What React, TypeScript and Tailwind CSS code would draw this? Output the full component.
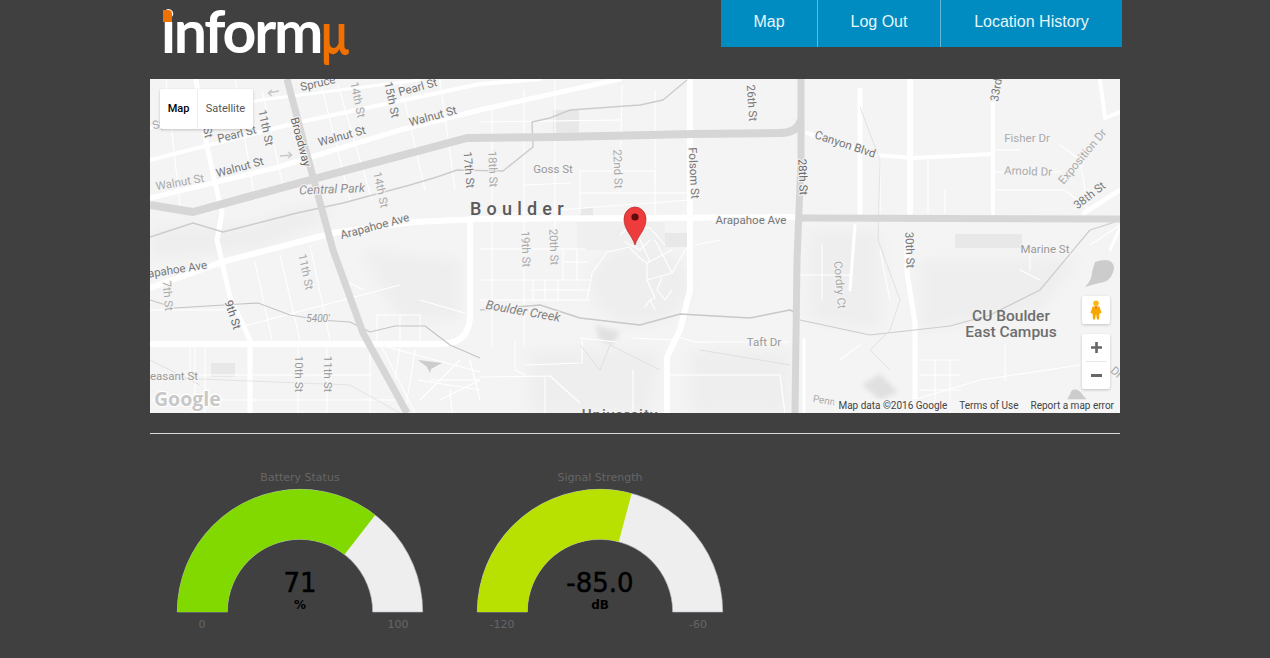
const mainRoads: [string, number][] = [
  ['M150 288 L222 262 L333 233 L413 222 L480 219 L800 217', 6],
  ['M150 344 L440 344 Q470 344 470 315 L470 219', 6],
  ['M196 80 L207 147 L222 213 L217 240 L230 297 L250 340 L250 413', 5],
  ['M690 80 L690 290 L680 330 L667 357 L667 413', 6],
  ['M910 80 L910 213', 6],
  ['M907 240 L907 273 L915 323 L915 413', 5],
  ['M993 103 L993 213', 4],
  ['M807 133 L877 155 L913 158 L973 155 L993 154', 4],
  ['M150 160 L300 122 L480 84 L540 79', 4],
  ['M150 198 L275 168 L400 130 L480 110 L620 79', 5],
  ['M150 128 L260 100 L420 80', 3],
  ['M804 340 L804 413', 3],
  ['M1120 112 L1105 118 L1100 80', 4],
  ['M1084 213 L1120 190', 5],
  ['M860 90 L860 213', 5],
  ['M855 225 L850 290', 3],
  ['M1110 250 L1120 228', 3],
]

const thinRoads = [
  'M166 79 L180 205', 'M235 79 L255 200', 'M262 90 L284 190', 'M320 80 L350 200', 'M338 85 L372 200',
  'M400 80 L425 190', 'M440 80 L455 190', 'M492 110 L492 345', 'M524 90 L524 345', 'M555 79 L555 240',
  'M622 85 L620 190', 'M655 90 L655 215', 'M480 122 L620 120', 'M492 215 L690 200', 'M580 171 L655 171 L655 178',
  'M580 171 L580 213', 'M580 193 L690 193', 'M525 185 L570 183', 'M255 262 L272 340', 'M280 255 L300 340',
  'M310 245 L330 340', 'M150 310 L230 310', 'M240 327 L400 285', 'M205 344 L205 413', 'M298 344 L298 413',
  'M327 344 L327 413', 'M195 344 L195 413', 'M250 375 L370 375', 'M370 345 L370 413', 'M250 400 L400 400',
  'M350 283 L363 290', 'M377 315 L420 315 L420 340', 'M377 315 L377 344', 'M400 315 L400 344', 'M420 300 L465 313',
  'M382 347 L415 413', 'M400 347 L395 380', 'M415 350 L405 413', 'M430 380 L480 380', 'M440 400 L480 380',
  'M450 390 L452 413', 'M420 400 L460 360', 'M470 360 L480 400', 'M418 380 L480 390', 'M380 345 L480 372',
  'M480 249 L585 249', 'M480 280 L590 280', 'M480 300 L590 300', 'M530 290 L590 290', 'M533 280 L533 300',
  'M545 280 L545 300', 'M558 280 L558 300', 'M563 250 L563 280', 'M577 250 L577 280', 'M565 262 L587 262',
  'M630 247 L607 252 L592 273 L587 300', 'M630 248 L640 258 L647 263 L647 280 L655 298 L650 300 L645 307', 'M650 300 L655 310',
  'M647 263 L672 250', 'M647 280 L672 273 L687 247', 'M655 240 L672 273', 'M662 277 L657 290 L665 300 L672 290',
  'M640 240 L650 262', 'M620 235 L630 226 L650 228 L665 245', 'M625 242 L640 250 L650 240',
  'M580 338 L617 342', 'M633 338 L673 340', 'M582 340 L582 363 L525 365', 'M515 342 L515 370 L525 375',
  'M480 377 L550 376 L580 403', 'M545 378 L545 413', 'M633 370 L633 413',
  'M675 336 L695 342 L790 342', 'M665 375 L780 375 L785 413',
  'M695 245 L720 240', 'M822 244 L822 300', 'M800 275 L850 275', 'M880 250 L890 300', 'M880 410 L980 380 L1080 365',
  'M920 360 L960 360', 'M920 375 L960 375', 'M920 390 L960 390', 'M935 360 L935 413', 'M950 360 L950 413',
  'M1005 345 L1005 380', 'M1030 250 L1030 270', 'M1020 270 L1040 280', 'M995 150 L1020 150', 'M1060 145 L1080 160 L1085 190',
  'M995 172 L1060 172', 'M995 190 L1065 190 L1090 210', 'M928 160 L928 213', 'M945 190 L945 213', 'M880 155 L880 213',
  'M1090 245 L1120 225', 'M150 375 L250 375', 'M190 345 L190 375', 'M150 400 L250 400', 'M840 360 L860 345',
]

const greyLines: [string, number, string][] = [
  ['M150 237 L193 223 L223 232 L297 213 L343 203 L410 185 L437 177 L457 170 L503 171 L533 147 L532 122 L550 118 L570 110 L640 105 L663 100 L687 80', 1.4, '#cccccc'],
  ['M150 300 L175 308 L240 304 L258 303 L290 315 L320 320 L350 322 L370 332 L395 326 L425 326 L450 345 L480 358', 1.1, '#c4c4c4'],
  ['M480 310 L540 305 L580 318 L640 325 L680 314 L750 318 L790 310 L800 315', 1.5, '#c8c8c8'],
  ['M800 320 L870 335 L950 326 L990 315 L1040 290 L1090 230 L1115 222', 1.2, '#cccccc'],
  ['M580 345 L600 370 L610 345 L630 355 L660 370', 0.7, '#d8d8d8'],
  ['M700 350 L790 365', 0.7, '#d8d8d8'],
  ['M860 107 L880 160 L878 240 L900 300 L890 330 L870 350 L890 370', 0.7, '#d8d8d8'],
  ['M150 360 L200 385', 0.7, '#d8d8d8'],
  ['M175 378 L350 385 L400 413', 0.6, '#d8d8d8'],
]

const labels: [string, number, number, number, number, string, boolean?][] = [
  ['Spruce', 318, 84, -13, 11.5, '#777'], ['14th St', 357, 100, 78, 11.5, '#aaa'], ['15th St', 391, 100, 78, 11.5, '#777'],
  ['Pearl St', 418, 88, -15, 11.5, '#777'], ['Walnut St', 433, 117, -15, 11.5, '#777'], ['Walnut St', 342, 137, -15, 11.5, '#777'],
  ['Broadway', 300, 142, 75, 11.5, '#666'], ['11th St', 265, 128, 78, 11.5, '#777'], ['Pearl St', 237, 135, -14, 11.5, '#777'],
  ['Walnut St', 240, 168, -15, 11.5, '#777'], ['Walnut St', 180, 183, -10, 11.5, '#aaa'], ['10th St', 205, 120, 80, 11.5, '#777'],
  ['Spruce', 170, 122, -15, 11.5, '#aaa'], ['17th St', 468, 170, 85, 11.5, '#777'], ['14th St', 380, 190, 78, 11.5, '#aaa'],
  ['Arapahoe Ave', 375, 227, -15, 11.5, '#777'], ['Arapahoe Ave', 172, 271, -9, 11.5, '#777'], ['7th St', 167, 296, 85, 11.5, '#aaa'],
  ['11th St', 305, 272, 78, 11.5, '#aaa'], ['9th St', 232, 315, 72, 11.5, '#666'], ['10th St', 298, 374, 90, 11.5, '#999'],
  ['11th St', 327, 374, 90, 11.5, '#999'], ['Pleasant St', 169, 377, 0, 11.5, '#999'], ['18th St', 492, 169, 88, 11.5, '#aaa'],
  ['19th St', 525, 249, 88, 11.5, '#aaa'], ['20th St', 553, 247, 88, 11.5, '#aaa'], ['22nd St', 617, 169, 88, 11.5, '#aaa'],
  ['Goss St', 553, 170, 0, 11.5, '#999'], ['Folsom St', 693, 173, 87, 11.5, '#777'], ['26th St', 751, 103, 86, 11.5, '#777'],
  ['28th St', 802, 177, 88, 11.5, '#666'], ['Arapahoe Ave', 751, 221, 0, 11.5, '#777'], ['Taft Dr', 764, 343, 0, 11.5, '#999'],
  ['Canyon Blvd', 845, 145, 18, 11.5, '#777'], ['33rd', 997, 90, -80, 11.5, '#777'], ['Fisher Dr', 1027, 139, 0, 11.5, '#aaa'],
  ['Arnold Dr', 1028, 172, 2, 11.5, '#aaa'], ['Exposition Dr', 1083, 157, -50, 11.5, '#aaa'], ['38th St', 1090, 196, -38, 11.5, '#777'],
  ['30th St', 909, 250, 88, 11.5, '#777'], ['Marine St', 1045, 250, 0, 11.5, '#999'], ['Cordry Ct', 839, 285, 85, 11.5, '#aaa'],
  ['Penn', 824, 401, 10, 10, '#aaa'], ['Dr', 1116, 373, 40, 11.5, '#aaa'],
  ['Central Park', 332, 190, -2, 12.5, '#909090', true], ['5400\'', 318, 319, 0, 10, '#999', true],
  ['Boulder Creek', 523, 312, 10, 12.5, '#808080', true],
]

function MapArt() {
  return (
    <svg viewBox="150 79 970 334" className="block w-full h-full" style={{ fontFamily: 'Roboto, sans-serif' }}>
      <defs>
        <filter id="soft" x="-40%" y="-40%" width="180%" height="180%"><feGaussianBlur stdDeviation="7" /></filter>
        <filter id="softer" x="-40%" y="-40%" width="180%" height="180%"><feGaussianBlur stdDeviation="2.5" /></filter>
      </defs>
      <rect x="150" y="79" width="970" height="334" fill="#f4f4f4" />
      <g fill="#eeeeee" filter="url(#soft)">
        <ellipse cx="640" cy="285" rx="50" ry="40" />
        <path d="M690 350 L790 350 L790 413 L690 413Z" />
        <path d="M920 260 L1080 260 L1040 310 L920 330Z" />
        <path d="M150 225 L250 225 L300 205 L340 215 L260 250 L150 260Z" />
        <path d="M530 350 L660 350 L650 413 L530 413Z" />
        <path d="M360 250 L460 260 L460 320 L400 320Z" />
        <path d="M810 230 L880 230 L880 330 L810 320Z" />
      </g>
      <g fill="#e0e0e0" filter="url(#softer)">
        <path d="M595 325 L620 332 L612 345 L600 340Z" />
        <path d="M862 385 L880 374 L898 392 L880 400Z" />
      </g>
      <g fill="#e8e8e8">
        <rect x="553" y="110" width="26" height="25" />
        <rect x="211" y="363" width="24" height="14" />
        <rect x="955" y="234" width="67" height="14" />
        <rect x="580" y="208" width="13" height="9" />
        <rect x="664" y="233" width="23" height="14" />
      </g>
      <rect x="577" y="222" width="88" height="28" fill="#efefef" />
      <g fill="none" stroke="#ffffff" strokeWidth="1.1" strokeLinecap="round" strokeLinejoin="round">
        {thinRoads.map((d, i) => <path key={i} d={d} />)}
      </g>
      <g fill="none" stroke="#ffffff" strokeLinecap="round" strokeLinejoin="round">
        {mainRoads.map(([d, w], i) => <path key={i} d={d} strokeWidth={w} />)}
      </g>
      <g fill="none" strokeLinejoin="round">
        {greyLines.map(([d, w, c], i) => <path key={i} d={d} strokeWidth={w} stroke={c} />)}
      </g>
      <g fill="none" stroke="#d6d6d6" strokeLinejoin="round">
        <path d="M150 205 L193 212 L310 180 L467 138 L560 137 L693 134 L780 133 Q797 133 801 120" strokeWidth="8" />
        <path d="M801 79 L801 160 L797 260 L795 413" strokeWidth="7" />
        <path d="M800 218 L1120 219" strokeWidth="7" />
        <path d="M287 79 L313 177 L333 250 L363 333 L407 413" strokeWidth="7" />
      </g>
      <g fill="#cccccc">
        <path d="M1095 262 Q1113 256 1114 268 Q1112 282 1099 283 L1085 287 Q1092 280 1092 272Z" />
        <path d="M1067 400 L1072 390 Q1078 388 1082 394 L1087 400Z" />
        <path d="M418 360 L442 363 L431 369 L430 373 L427 367Z" />
      </g>
      <path d="M268 93 L279 91 M268 93 L272 90 M268 93 L272 96" stroke="#c8c8c8" strokeWidth="1.4" fill="none" />
      <path d="M280 156 L292 155 M292 155 L288 152 M292 155 L288 158" stroke="#c8c8c8" strokeWidth="1.4" fill="none" />
      {labels.map(([t, x, y, r, s, c, it], i) => (
        <text key={i} x={x} y={y} fontSize={s} fill={c} fontStyle={it ? 'italic' : 'normal'} textAnchor="middle"
          dominantBaseline="middle" transform={`rotate(${r} ${x} ${y})`} stroke="#f5f5f5" strokeWidth="2" paintOrder="stroke">
          {t}
        </text>
      ))}
      <text x="470" y="215" fontSize="18" fontWeight="500" letterSpacing="5.2" fill="#5a5a5a">Boulder</text>
      <g fontSize="15.5" fontWeight="500" fill="#6e6e6e" textAnchor="middle">
        <text x="1011" y="321">CU Boulder</text>
        <text x="1011" y="337">East Campus</text>
      </g>
      <text x="620" y="420" fontSize="15" fontWeight="500" letterSpacing="1" fill="#6a6a6a" textAnchor="middle">University</text>
      <text x="154" y="406" fontSize="19.5" fontWeight="700" fill="#c8c8c8" stroke="#ffffff" strokeWidth="2.4" paintOrder="stroke"
        style={{ fontFamily: '"Open Sans", sans-serif' }}>Google</text>
      <path d="M635 245 C632 235 624 230 624 219 A11 12 0 0 1 646 219 C646 230 638 235 635 245Z" fill="#ee3b3b" stroke="#b52a2a" strokeWidth="0.7" />
      <circle cx="635" cy="217" r="3.6" fill="#5e0b0b" />
    </svg>
  )
}

function Gauge({ title, value, unit, min, max, ratio, color }: { title: string; value: string; unit: string; min: string; max: string; ratio: number; color: string }) {
  const cx = 150
  const cy = 152
  const R = 122.7
  const r = 72.7
  const a = Math.PI * (1 - ratio)
  const ox = cx + R * Math.cos(a)
  const oy = cy - R * Math.sin(a)
  const ix = cx + r * Math.cos(a)
  const iy = cy - r * Math.sin(a)
  return (
    <svg viewBox="0 0 300 180" className="w-[300px] h-[180px] block" style={{ fontFamily: '"DejaVu Sans", sans-serif' }}>
      <text x={cx} y="21" fontSize="11" fill="#666666" textAnchor="middle">{title}</text>
      <path d={`M${cx - R} ${cy} A${R} ${R} 0 0 1 ${cx + R} ${cy} L${cx + r} ${cy} A${r} ${r} 0 0 0 ${cx - r} ${cy}Z`} fill="#eeeeee" stroke="#b9bdc6" strokeWidth="0.6" />
      <path d={`M${cx - R} ${cy} A${R} ${R} 0 0 1 ${ox} ${oy} L${ix} ${iy} A${r} ${r} 0 0 0 ${cx - r} ${cy}Z`} fill={color} />
      <text x={cx} y="132" fontSize="26" fill="#000000" stroke="#000000" strokeWidth="0.5" textAnchor="middle">{value}</text>
      <text x={cx} y="149" fontSize="12" fontWeight="700" fill="#000000" textAnchor="middle">{unit}</text>
      <text x="52" y="168" fontSize="11" fill="#666666" textAnchor="middle">{min}</text>
      <text x="248" y="168" fontSize="11" fill="#666666" textAnchor="middle">{max}</text>
    </svg>
  )
}

export default function App() {
  return (
    <div className="min-h-screen bg-[#404040] overflow-hidden">
      <div className="w-[970px] mx-auto">
        <header className="h-[79px] flex justify-between items-start">
          <div className="relative ml-[11px] mt-[3px] flex text-white text-[59px] leading-[56px] font-bold tracking-[-2.2px]" style={{ fontFamily: 'Lato, sans-serif' }}>
            <span>inform</span>
            <span className="inline-block text-[#f07000] text-[62px] scale-x-[0.74] origin-left">μ</span>
            <span className="absolute left-[2px] top-[7px] w-[9px] h-[12px] bg-[#f07000] rounded-tr-[4px]" />
          </div>
          <nav className="flex h-[47px] bg-[#008cc0] text-[#e8f5fa] text-[16px] leading-[20px] mr-[-2px] text-center" style={{ fontFamily: '"Liberation Sans", sans-serif' }}>
            <a className="w-[96px] pt-[12px]">Map</a>
            <a className="w-[123px] pt-[12px] border-l border-[#66b8d8]">Log Out</a>
            <a className="w-[182px] pt-[12px] border-l border-[#66b8d8]">Location History</a>
          </nav>
        </header>

        <div className="relative h-[334px] overflow-hidden">
          <MapArt />
          <div className="absolute left-[10px] top-[10px] flex h-[40px] bg-white rounded-[2px] shadow-[0_1px_3px_rgba(0,0,0,0.2)] text-[11px] leading-[40px]" style={{ fontFamily: 'Roboto, sans-serif' }}>
            <span className="w-[38px] text-center font-medium text-black border-r border-[#eeeeee]">Map</span>
            <span className="w-[55px] text-center text-[#565656]">Satellite</span>
          </div>
          <div className="absolute left-[932px] top-[217px] w-[28px] h-[28px] bg-white rounded-[2px] shadow-[0_1px_3px_rgba(0,0,0,0.2)] flex items-center justify-center">
            <svg width="14" height="20" viewBox="0 0 14 20">
              <circle cx="7" cy="3.2" r="2.8" fill="#fdb813" />
              <path d="M3.5 6.5 H10.5 L12.5 13 L10.5 13.5 L10 19.5 H8 L7 14 L6 19.5 H4 L3.5 13.5 L1.5 13Z" fill="#f6a800" />
              <path d="M6 6.5 L7 9.5 L8 6.5Z" fill="#e5592a" />
            </svg>
          </div>
          <div className="absolute left-[932px] top-[255px] w-[28px] h-[55px] bg-white rounded-[2px] shadow-[0_1px_3px_rgba(0,0,0,0.2)] flex flex-col items-center">
            <div className="h-[27px] flex items-center justify-center">
              <svg width="11" height="11" viewBox="0 0 11 11"><path d="M4.2 0h2.6v4.2H11v2.6H6.8V11H4.2V6.8H0V4.2h4.2z" fill="#666666" /></svg>
            </div>
            <div className="w-[20px] h-px bg-[#e6e6e6]" />
            <div className="h-[27px] flex items-center justify-center">
              <svg width="11" height="3" viewBox="0 0 11 3"><rect width="11" height="3" fill="#666666" /></svg>
            </div>
          </div>
          <div className="absolute right-0 bottom-0 h-[14px] pl-[4px] pr-[6px] flex gap-[12px] bg-[#f5f5f5]/70 text-[10px] leading-[14px] text-[#444444] whitespace-nowrap" style={{ fontFamily: 'Roboto, sans-serif' }}>
            <span>Map data ©2016 Google</span>
            <span>Terms of Use</span>
            <span>Report a map error</span>
          </div>
        </div>

        <hr className="mt-[20px] border-t border-[#d9d9d9]" />

        <div className="flex mt-[26px] pb-[18px]">
          <Gauge title="Battery Status" value="71" unit="%" min="0" max="100" ratio={0.71} color="#81d900" />
          <Gauge title="Signal Strength" value="-85.0" unit="dB" min="-120" max="-60" ratio={0.583} color="#b8e000" />
        </div>
      </div>
    </div>
  )
}
